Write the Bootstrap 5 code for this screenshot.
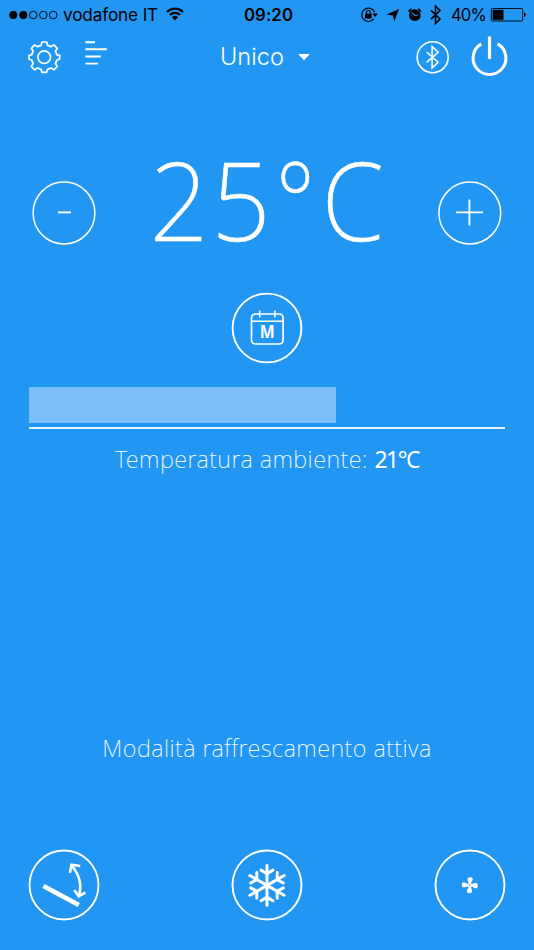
<!DOCTYPE html>
<html lang="it">
<head>
<meta charset="utf-8">
<meta name="viewport" content="width=device-width, initial-scale=1">
<title>Unico</title>
<link href="https://cdn.jsdelivr.net/npm/bootstrap@5.3.0/dist/css/bootstrap.min.css" rel="stylesheet">
<style>
body{background:#2196f3;font-family:"Noto Sans","Open Sans",sans-serif;overflow:hidden}
svg{display:block;flex:none;fill:none;stroke:#fff}
.screen{width:534px;height:950px}
.statusbar{height:30px;color:#000;font:17.2px/30px Inter,Roboto,sans-serif}
.statusbar svg{stroke:#000}
.third{flex:1 1 0;height:30px}
.carrier{letter-spacing:-.15px;margin-left:5px}
.clock{font-weight:600;font-size:16.8px;letter-spacing:.1px;padding-left:3px}
.pct{font-size:16.6px;letter-spacing:-.8px;margin-left:7.5px}
.topbar{height:54px;padding:0 26px 0 28px}
.device{font:300 23.5px/54px Inter,Roboto,sans-serif;padding-left:6px;letter-spacing:.1px}
.caret-down{margin-left:14px}
.setpoint{height:150px;margin-top:54px;padding:0 32px}
.temp{font-weight:200;font-size:109px;line-height:130px;height:158px;-webkit-text-stroke:.6px #fff}
.temp span{display:block;text-align:center}
.temp .digit{transform:scaleX(.95)}
.temp .degree{transform:scaleX(.86)}
.temp .unit{transform:scaleX(.92)}
.round-btn{background:none;border:0;padding:0}
.timer-row{height:72px;margin-top:4px}
.meter{margin:22.5px 29px 0;height:42px;border-bottom:2px solid #e9f5ff}
.meter-fill{height:36px;background:#7abffa}
.caption-text{font-weight:200;font-size:23.5px;line-height:36px;height:36px;white-space:nowrap;letter-spacing:.45px}
.caption-text strong{font-weight:400;font-size:23px;letter-spacing:-1.5px}
.ambient{margin-top:12px}
.mode-text{margin-top:253px}
.bottombar{margin-top:83.5px;padding:0 28px}
</style>
</head>
<body>
<main class="screen d-flex flex-column text-white">
  <div class="statusbar d-flex align-items-center">
    <div class="third d-flex align-items-center">
      <svg width="58" height="30"><g stroke-width=".9"><circle cx="13.3" cy="15" r="3.7" fill="#000"/><circle cx="23.3" cy="15" r="3.7" fill="#000"/><circle cx="33.3" cy="15" r="3.8"/><circle cx="43.3" cy="15" r="3.8"/><circle cx="53.2" cy="15" r="3.8"/></g></svg>
      <span class="carrier">vodafone IT</span>
      <svg class="ms-2" width="18" height="30"><path d="M1 12a11.4 11.4 0 0 1 16 0M3.9 15a7.2 7.2 0 0 1 10.2 0" stroke-width="2.3"/><path d="M5.9 17.2a4.5 4.5 0 0 1 6.2 0L9 20.4z" fill="#000" stroke="none"/></svg>
    </div>
    <div class="clock">09:20</div>
    <div class="third d-flex align-items-center justify-content-end">
      <svg width="84" height="30" viewBox="360 0 84 30">
        <path d="M375.6 12.2a6.7 6.7 0 1 0-.8 6.6" stroke-width="1.2"/><path d="M373.3 13.4h5.6l-2.8 3.5z" fill="#000" stroke="none"/><path d="M367.5 14v-1.6a1.9 1.9 0 0 1 3.8 0V14" stroke-width="1.1"/><path d="M366 13.7h6.6v4.8H366z" fill="#000" stroke="none"/>
        <path d="M400 9l-4.7 12.2-1.3-5.8-6.5-1z" fill="#000" stroke="none"/>
        <circle cx="415.8" cy="15.2" r="5.9" fill="#000" stroke="none"/><path d="M409.7 11.6a8 8 0 0 1 2.8-2.7M419.1 8.9a8 8 0 0 1 2.8 2.7" stroke-width="1.6"/><path d="M412.8 12.6l3.2 2.8 2.7-.4" stroke="#2196f3" stroke-width="1.1"/>
        <path d="M432 10.4l9 8.6-4.5 4.3V6.2l4.5 4.3-9 8.6" stroke-width="1.6"/>
      </svg>
      <span class="pct">40%</span>
      <svg class="ms-1" width="44" height="30" viewBox="490 0 44 30"><rect x="491.3" y="8.5" width="31.4" height="12.5" rx="1" stroke-width=".9"/><path d="M492.7 9.8h10.8v10h-10.8z" fill="#000" stroke="none"/><path d="M524 12.6q1.8.4 1.8 2.2t-1.8 2.2z" fill="#000" stroke="none"/></svg>
    </div>
  </div>

  <header class="topbar d-flex align-items-center">
    <div class="d-flex">
      <svg width="34" height="54" viewBox="28 30 34 54"><circle cx="44.2" cy="57.2" r="6.3" stroke-width="1.6"/><path stroke-width="1.7" stroke-linejoin="round" d="M41.9 42h4.8l.8 3.4q2 .4 3.4 1.4l3-1.9 3.4 3.4-1.9 3q1 1.6 1.4 3.4l2.8.7v3.9l-2.8.7q-.4 1.8-1.4 3.4l1.9 3-3.4 3.4-3-1.9q-1.4 1-3.4 1.4l-.8 3h-4.8l-.8-3q-2-.4-3.4-1.4l-3 1.9-3.4-3.4 1.9-3q-1-1.6-1.4-3.4l-2.8-.7v-3.9l2.8-.7q.4-1.8 1.4-3.4l-1.9-3 3.4-3.4 3 1.9q1.4-1 3.4-1.4z"/></svg>
      <svg width="50" height="54" viewBox="62 30 50 54"><path d="M85.5 42.3h9.5M85.5 49.3h21.3M85.5 56.5h15.3M85.5 63.6h12.5" stroke-width="1.9"/></svg>
    </div>
    <div class="d-flex align-items-center mx-auto">
      <span class="device">Unico</span>
      <svg class="caret-down" width="12" height="54"><path d="M0 24h12l-6 6.2z" fill="#fff" stroke="none"/></svg>
    </div>
    <div class="d-flex">
      <svg width="96" height="54" viewBox="412 30 96 54"><circle cx="432.7" cy="57.2" r="15.5" stroke-width="1.6"/><path d="M426.7 52l11.4 10.2-6 5.8V46.4l6 5.8L426.7 62.4" stroke-width="1.5"/><path d="M481.3 43.9a16.4 16.4 0 1 0 16.4 0" stroke-width="3"/><path d="M489.5 36.5V59" stroke-width="3.2"/></svg>
    </div>
  </header>

  <section class="setpoint d-flex align-items-center justify-content-between">
    <button class="round-btn" aria-label="Diminuisci"><svg width="64" height="64"><circle cx="32" cy="32" r="30.9" stroke-width="1.5"/><path d="M26 31.4h13" stroke-width="1.9"/></svg></button>
    <div class="temp d-flex"><span class="digit">2</span><span class="digit">5</span><span class="degree">°</span><span class="unit">C</span></div>
    <button class="round-btn" aria-label="Aumenta"><svg width="64" height="64"><circle cx="31.8" cy="32" r="30.9" stroke-width="1.5"/><path d="M18 31.4h27M31.4 18.5v26" stroke-width="1.8"/></svg></button>
  </section>

  <div class="timer-row d-flex justify-content-center">
    <svg width="72" height="72" viewBox="230.5 292 72 72"><circle cx="266.5" cy="328" r="34.4" stroke-width="1.9"/><rect x="251" y="314" width="31.6" height="30" rx="4" stroke-width="1.7"/><path d="M251 321.3h31.6M259.2 310.5v7M274.4 310.5v7" stroke-width="1.6"/><text x="266.8" y="337.8" text-anchor="middle" font-family="Open Sans" font-weight="700" font-size="17" textLength="15" lengthAdjust="spacingAndGlyphs" fill="#fff" stroke="none">M</text></svg>
  </div>

  <div class="meter"><div class="meter-fill" style="width:64.5%"></div></div>
  <div class="ambient caption-text text-center"><span>Temperatura ambiente: </span><strong>21°C</strong></div>
  <div class="mode-text caption-text text-center">Modalità raffrescamento attiva</div>

  <footer class="bottombar d-flex justify-content-between">
    <svg width="72" height="72" viewBox="28 849.5 72 72"><circle cx="64" cy="885.5" r="34.5" stroke-width="1.9"/><path d="M43.5 886.5l35.3 19" stroke-width="4.8"/><path d="M72 866.5q11.5 14 7 29M69.9 873.3l1.6-8 8.8 1.2M74.2 890.5l4.5 6.3 6.7-3.8" stroke-width="2.6"/></svg>
    <svg width="72" height="72" viewBox="230.5 849.5 72 72"><circle cx="266.5" cy="885.5" r="34.5" stroke-width="1.9"/>
      <defs><path id="arm" d="M266.5 885.9v-19.8M260.5 870.6l6 3.6 6-3.6" stroke-width="3" stroke-linecap="round"/></defs>
      <use href="#arm"/><use href="#arm" transform="rotate(60 266.5 885.9)"/><use href="#arm" transform="rotate(120 266.5 885.9)"/><use href="#arm" transform="rotate(180 266.5 885.9)"/><use href="#arm" transform="rotate(240 266.5 885.9)"/><use href="#arm" transform="rotate(300 266.5 885.9)"/></svg>
    <svg width="72" height="72" viewBox="433.5 849.5 72 72"><circle cx="469.5" cy="885.5" r="34.5" stroke-width="1.9"/>
      <defs><path id="blade" d="M468 885.5q.2-2.2-.6-4c-1-3 .6-3.9 2.6-3.8 2.4.1 2.9 1.9 1.8 3.6-.9 1.4-1.3 2.6-1.2 4.2z" fill="#fff" stroke="none"/></defs>
      <use href="#blade"/><use href="#blade" transform="rotate(90 469.3 885.7)"/><use href="#blade" transform="rotate(180 469.3 885.7)"/><use href="#blade" transform="rotate(270 469.3 885.7)"/><circle cx="469.3" cy="885.7" r=".8" fill="#2196f3" stroke="none"/></svg>
  </footer>
</main>
<script src="https://cdn.jsdelivr.net/npm/bootstrap@5.3.0/dist/js/bootstrap.bundle.min.js"></script>
</body>
</html>
